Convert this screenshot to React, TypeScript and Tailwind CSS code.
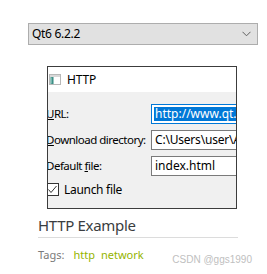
import React from "react";

function Chevron() {
  return (
    <svg width="9" height="6" viewBox="0 0 9 6" className="block">
      <path d="M0.5 0.8 L4.5 4.8 L8.5 0.8" fill="none" stroke="#606060" strokeWidth="1" />
    </svg>
  );
}

function WinIcon() {
  return (
    <svg width="12" height="11" viewBox="0 0 12 11" className="block">
      <rect x="0.5" y="0.5" width="11" height="10" fill="#f4f4f4" stroke="#b8b8b8" />
      <rect x="1" y="1" width="10" height="2" fill="#d8d8d8" />
      <rect x="1.5" y="3" width="3" height="7" fill="#3d8f86" />
      <rect x="2" y="3.5" width="1" height="6" fill="#78b8b0" />
      <rect x="5" y="3" width="6" height="7" fill="#ffffff" />
    </svg>
  );
}

export default function App() {
  return (
    <div className="w-[267px] h-[274px] bg-white overflow-hidden font-['Noto_Sans','Open_Sans',sans-serif] text-black">
      <div className="ml-[28px] mt-[23px] w-[230px] h-[22px] border border-[#adadad] bg-[#e1e1e1] flex items-center justify-between pl-[3px] pr-[6px]">
        <span className="text-[12px] leading-none tracking-[-0.3px]">Qt6 6.2.2</span>
        <Chevron />
      </div>

      <div className="ml-[47px] mt-[21px] w-[190px] h-[143px] border border-[#3c3c3c] flex flex-col overflow-hidden">
        <div className="h-[25px] bg-white flex items-center gap-[6px] pl-[1px] shrink-0">
          <WinIcon />
          <span className="text-[12px] leading-none tracking-[-0.2px]">HTTP</span>
        </div>
        <div className="flex-1 bg-[#f0f0f0] pt-[12px] -ml-[2px]">
          <div className="grid grid-cols-[105px_140px] gap-y-[6px] items-center text-[11.5px] leading-none tracking-[-0.5px] whitespace-nowrap">
            <span><span className="underline">U</span>RL:</span>
            <div className="h-[20px] border border-[#0078d7] bg-white p-[2px] flex text-[12px]">
              <div className="flex-1 bg-[#0078d7] text-white flex items-center pl-[1px] tracking-[0px]">http://www.qt.io</div>
            </div>
            <span><span className="underline">D</span>ownload directory:</span>
            <div className="h-[20px] border border-[#7a7a7a] bg-white flex items-center pl-[3px] tracking-[-0.2px] text-[12px]">C:\Users\user\AppData</div>
            <span>Default <span className="underline">f</span>ile:</span>
            <div className="h-[20px] border border-[#7a7a7a] bg-white flex items-center pl-[3px] tracking-[0px] text-[12px]">index.html</div>
          </div>
          <div className="mt-[7px] flex items-center gap-[5px] text-[12px] leading-none tracking-[-0.3px] whitespace-nowrap">
            <div className="w-[13px] h-[13px] border border-[#333] bg-white flex items-center justify-center">
              <svg width="11" height="11" viewBox="0 0 11 11" className="block">
                <path d="M1.5 5.5 L4 8.5 L9.5 2" fill="none" stroke="#333" strokeWidth="1" />
              </svg>
            </div>
            <span>Launch file</span>
          </div>
        </div>
      </div>

      <div className="ml-[38px] w-[200px] mt-[7px]">
        <div className="text-[15px] leading-[18px] text-[#3a3d40] tracking-[-0.3px] pb-[3px] border-b border-[#dcdcdc]">HTTP Example</div>
        <div className="flex items-start justify-between mt-[11px]">
          <div className="flex items-center text-[11px] leading-none">
            <span className="text-[#7a7a7a] mr-[9px]">Tags:</span>
            <span className="text-[#95b400] mr-[6px]">http</span>
            <span className="text-[#95b400]">network</span>
          </div>
          <span className="text-[10px] leading-none text-[#c0c0c0] translate-y-[6px] translate-x-[14px] font-['Liberation_Sans',sans-serif]">CSDN @ggs1990</span>
        </div>
      </div>
    </div>
  );
}
